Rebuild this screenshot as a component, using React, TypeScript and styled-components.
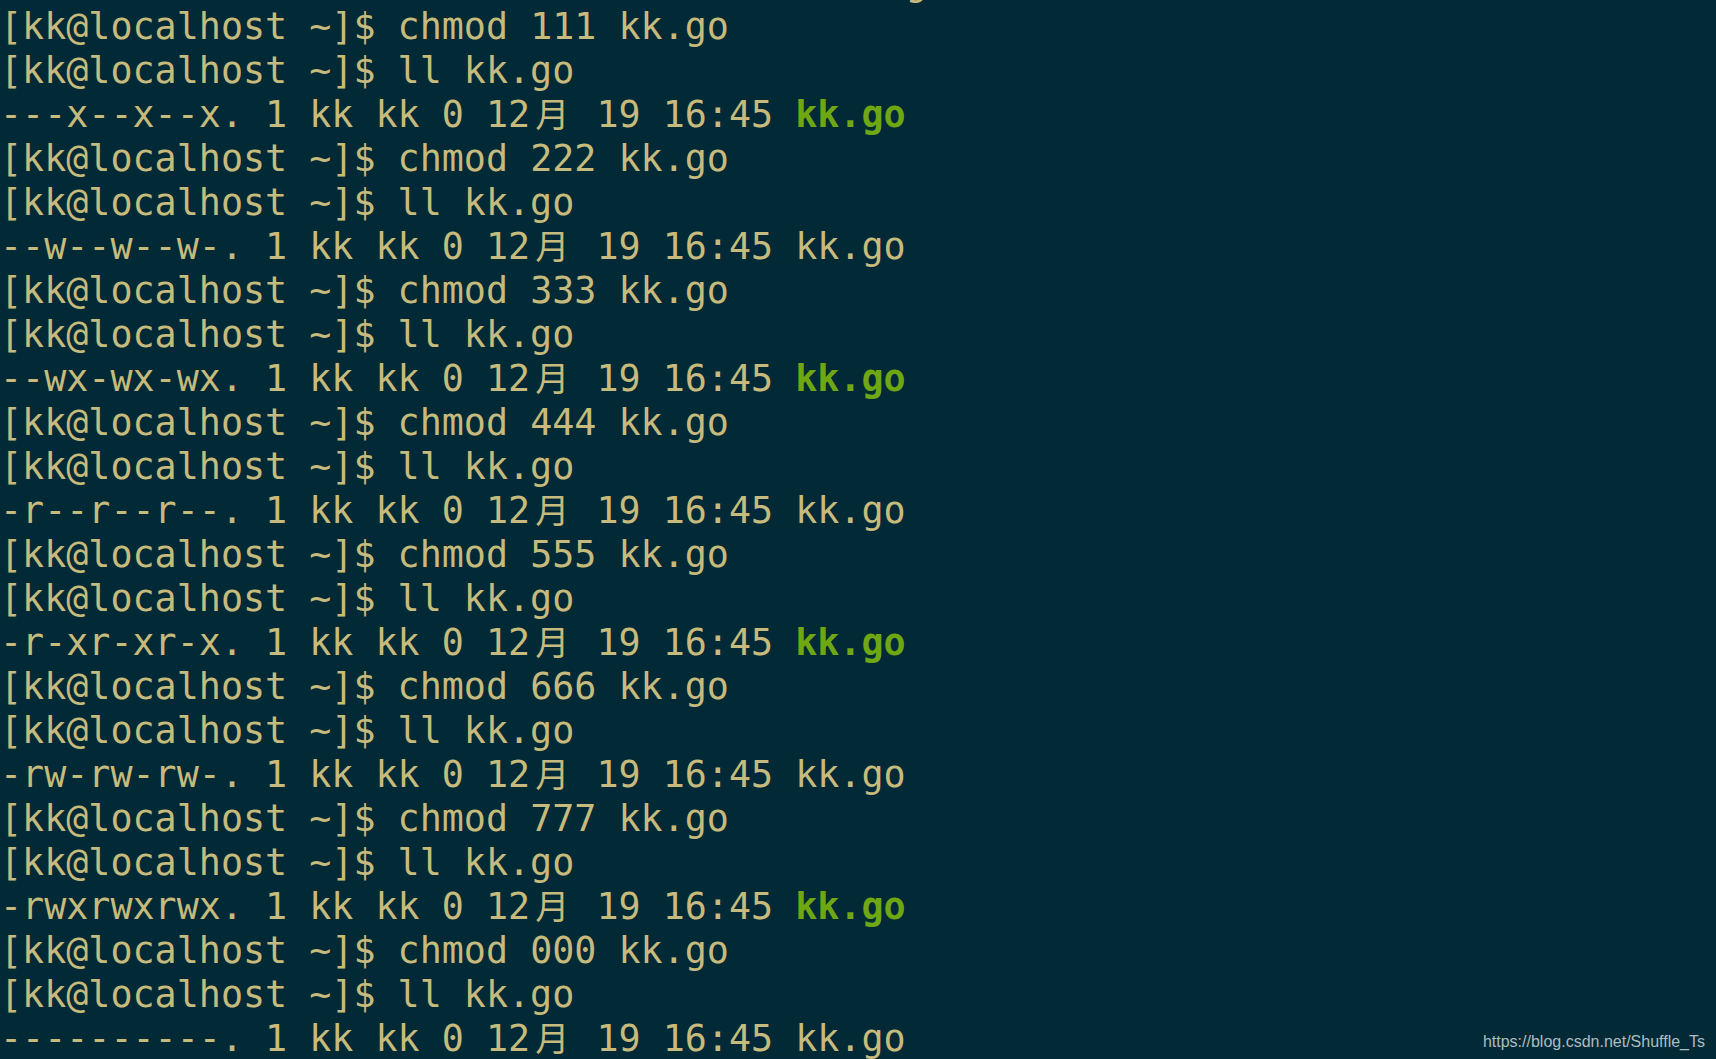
import React from "react";
import styled, { createGlobalStyle } from "styled-components";

const CELL = 22.1;

const GlobalStyle = createGlobalStyle`
  html, body {
    margin: 0;
    padding: 0;
    height: 100%;
    background: #022a36;
    overflow: hidden;
  }
`;

const Screen = styled.div`
  position: relative;
  width: 100vw;
  height: 100vh;
  overflow: hidden;
  background: #022a36;
`;

const Output = styled.div`
  display: flex;
  flex-direction: column;
  margin-top: -39px;
  font-family: "DejaVu Sans Mono", "Liberation Mono", monospace;
  font-size: 36.7px;
  line-height: 44px;
  color: #c6bb7c;
  white-space: pre;
`;

const Line = styled.div`
  height: 44px;
`;

const Wide = styled.span`
  display: inline-block;
  width: ${CELL * 2}px;
  line-height: 1;
  text-align: center;
  font-family: "Noto Sans CJK SC", "Noto Sans CJK JP", sans-serif;
  font-size: 34px;
`;

const FileName = styled.span<{ $exec: boolean }>`
  color: ${(p) => (p.$exec ? "#6fa712" : "inherit")};
  font-weight: ${(p) => (p.$exec ? 700 : 400)};
`;

const Watermark = styled.div`
  position: absolute;
  right: 11px;
  bottom: 8px;
  font-family: "Liberation Sans", Arial, sans-serif;
  font-size: 16px;
  color: #aebcc2;
`;

const PROMPT = "[kk@localhost ~]$ ";

const modes: [string, string, boolean][] = [
  ["111", "---x--x--x.", true],
  ["222", "--w--w--w-.", false],
  ["333", "--wx-wx-wx.", true],
  ["444", "-r--r--r--.", false],
  ["555", "-r-xr-xr-x.", true],
  ["666", "-rw-rw-rw-.", false],
  ["777", "-rwxrwxrwx.", true],
  ["000", "----------.", false],
];

const Listing = ({ perms, exec }: { perms: string; exec: boolean }) => (
  <Line>
    {perms} 1 kk kk 0 12<Wide>月</Wide> 19 16:45 <FileName $exec={exec}>kk.go</FileName>
  </Line>
);

export default function App() {
  return (
    <Screen>
      <GlobalStyle />
      <Output>
        <Line>-rw-rw-r--. 1 kk kk 0 12-19 16:40 note.log</Line>
        {modes.map(([num, perms, exec]) => (
          <React.Fragment key={num}>
            <Line>{PROMPT}chmod {num} kk.go</Line>
            <Line>{PROMPT}ll kk.go</Line>
            <Listing perms={perms} exec={exec} />
          </React.Fragment>
        ))}
      </Output>
      <Watermark>https://blog.csdn.net/Shuffle_Ts</Watermark>
    </Screen>
  );
}
